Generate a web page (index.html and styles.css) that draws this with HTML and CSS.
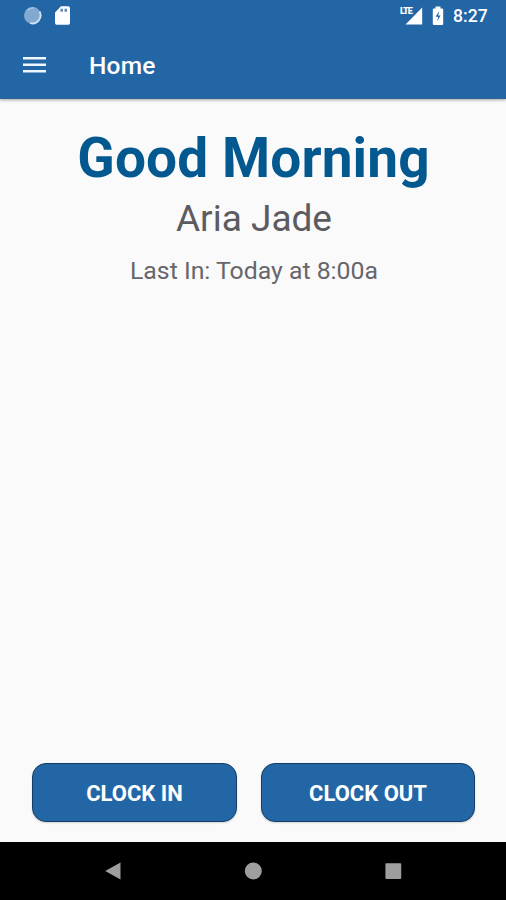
FILE: index.html
```html
<!DOCTYPE html>
<html lang="en">
<head>
<meta charset="utf-8">
<title>Home</title>
<link rel="stylesheet" href="styles.css">
</head>
<body>
<div class="screen">
  <header class="header">
    <div class="status">
      <svg class="sync" width="20" height="20" viewBox="0 0 20 20"><circle cx="9.500" cy="9.500" r="8.500" fill="#82a9d0"/><path d="M4.200 4.500A7.800 7.800 0 0 1 11 2" fill="none" stroke="#a9c6e2" stroke-width="1.400"/><path d="M16.500 5.500A8 8 0 0 1 7 17" fill="none" stroke="#d0e6f8" stroke-width="1.800"/></svg>
      <svg class="card" width="16" height="20" viewBox="0 0 16 20"><path d="M6 .3h7.200q1.800 0 1.800 1.800v14.800q0 1.800-1.800 1.800H1.800Q0 18.700 0 16.900V6.500z" fill="#fff"/><path d="M5.500 2.700h2.500v3H5.500zM9.500 2.700H12v3H9.500z" fill="#5f88b4"/></svg>
      <div class="status-right">
        <div class="signal">
          <span class="lte">LTE</span>
          <svg width="18" height="18" viewBox="0 0 18 18"><path d="M17.200.5v17H.5z" fill="#fff"/></svg>
        </div>
        <svg class="battery" width="12" height="20" viewBox="0 0 12 20"><path d="M3.500.5h5v2H10q1.200 0 1.200 1.200v14.100q0 1.200-1.200 1.200H2Q.8 19 .8 17.800V3.700Q.8 2.500 2 2.500h1.500z" fill="#fff"/><path d="M7.200 5 3.600 10.800h2.600l-1 4.400L8.600 9.500H6.200z" fill="#2366a5"/></svg>
        <span class="time">8:27</span>
      </div>
    </div>
    <div class="toolbar">
      <svg width="24" height="18" viewBox="0 0 24 18"><path d="M0 1h23v2.600H0zM0 7.500h23v2.600H0zM0 14h23v2.600H0z" fill="#eef6ff"/></svg>
      <span class="title">Home</span>
    </div>
  </header>
  <main class="content">
    <h1>Good Morning</h1>
    <p class="name">Aria Jade</p>
    <p class="last">Last In: Today at 8:00a</p>
    <div class="actions">
      <button class="clock-in">CLOCK IN</button>
      <button class="clock-out">CLOCK OUT</button>
    </div>
  </main>
  <nav class="navbar">
    <svg width="18" height="18" viewBox="0 0 18 18"><path d="M1.200 9 16.500.5v17z" fill="#9e9e9e"/></svg>
    <svg width="18" height="18" viewBox="0 0 18 18"><circle cx="9.300" cy="9" r="8.500" fill="#9e9e9e"/></svg>
    <svg width="18" height="18" viewBox="0 0 18 18"><rect x="1.400" y="1.300" width="15.800" height="15.600" rx=".8" fill="#9e9e9e"/></svg>
  </nav>
</div>
</body>
</html>
```

FILE: styles.css
```css
* { box-sizing: border-box; }
body { margin: 0; font-family: Roboto, "Liberation Sans", sans-serif; }
.screen { width: 506px; height: 900px; display: flex; flex-direction: column; background: #fafafa; overflow: hidden; }
.header { height: 99px; flex: none; background: #2366a5; color: #fff; border-bottom: 1px solid #30618f; box-shadow: 0 1px 3px rgba(0, 0, 0, .35); }
.status { height: 31px; display: flex; align-items: center; padding: 0 18px 0 23px; }
.card { margin-left: 12px; }
.status-right { margin-left: auto; display: flex; align-items: center; }
.signal { position: relative; display: flex; width: 18px; height: 18px; }
.lte { position: absolute; left: -5px; top: -1px; font-size: 9px; line-height: 10px; font-weight: 900; letter-spacing: -.9px; }
.battery { margin-left: 9px; }
.time { margin-left: 9px; width: 35px; font-size: 17.6px; line-height: 22px; font-weight: 500; white-space: nowrap; }
.toolbar { height: 67px; display: flex; align-items: center; padding: 0 0 0 23px; }
.title { margin-left: 42px; padding-top: 2px; font-size: 24.5px; line-height: 30px; font-weight: 500; letter-spacing: .2px; }
.content { flex: 1; display: flex; flex-direction: column; align-items: center; padding-top: 26px; }
h1, p { margin: 0; white-space: nowrap; }
h1 { padding-left: 1px; font-size: 55px; line-height: 66px; font-weight: 700; letter-spacing: .1px; color: #03598f; }
.name { margin-top: 6px; padding-left: 2px; font-size: 37px; line-height: 44px; color: #5b5b60; }
.last { margin-top: 15px; padding-left: 2px; font-size: 24.8px; line-height: 30px; color: #66666b; }
.actions { width: 100%; margin-top: auto; padding: 0 31px 20px 32px; display: flex; gap: 24px; }
button { height: 59px; padding: 2px 0 0; border: 1.5px solid #153e67; border-radius: 14px; background: #2366a5; color: #fff; font: 700 22px/26px Roboto, "Liberation Sans", sans-serif; box-shadow: 0 1px 2px rgba(0, 0, 0, .15); }
.clock-in { width: 205px; }
.clock-out { width: 214px; }
.navbar { height: 58px; flex: none; display: flex; align-items: center; justify-content: space-between; padding: 0 104px; background: #000; }
```
